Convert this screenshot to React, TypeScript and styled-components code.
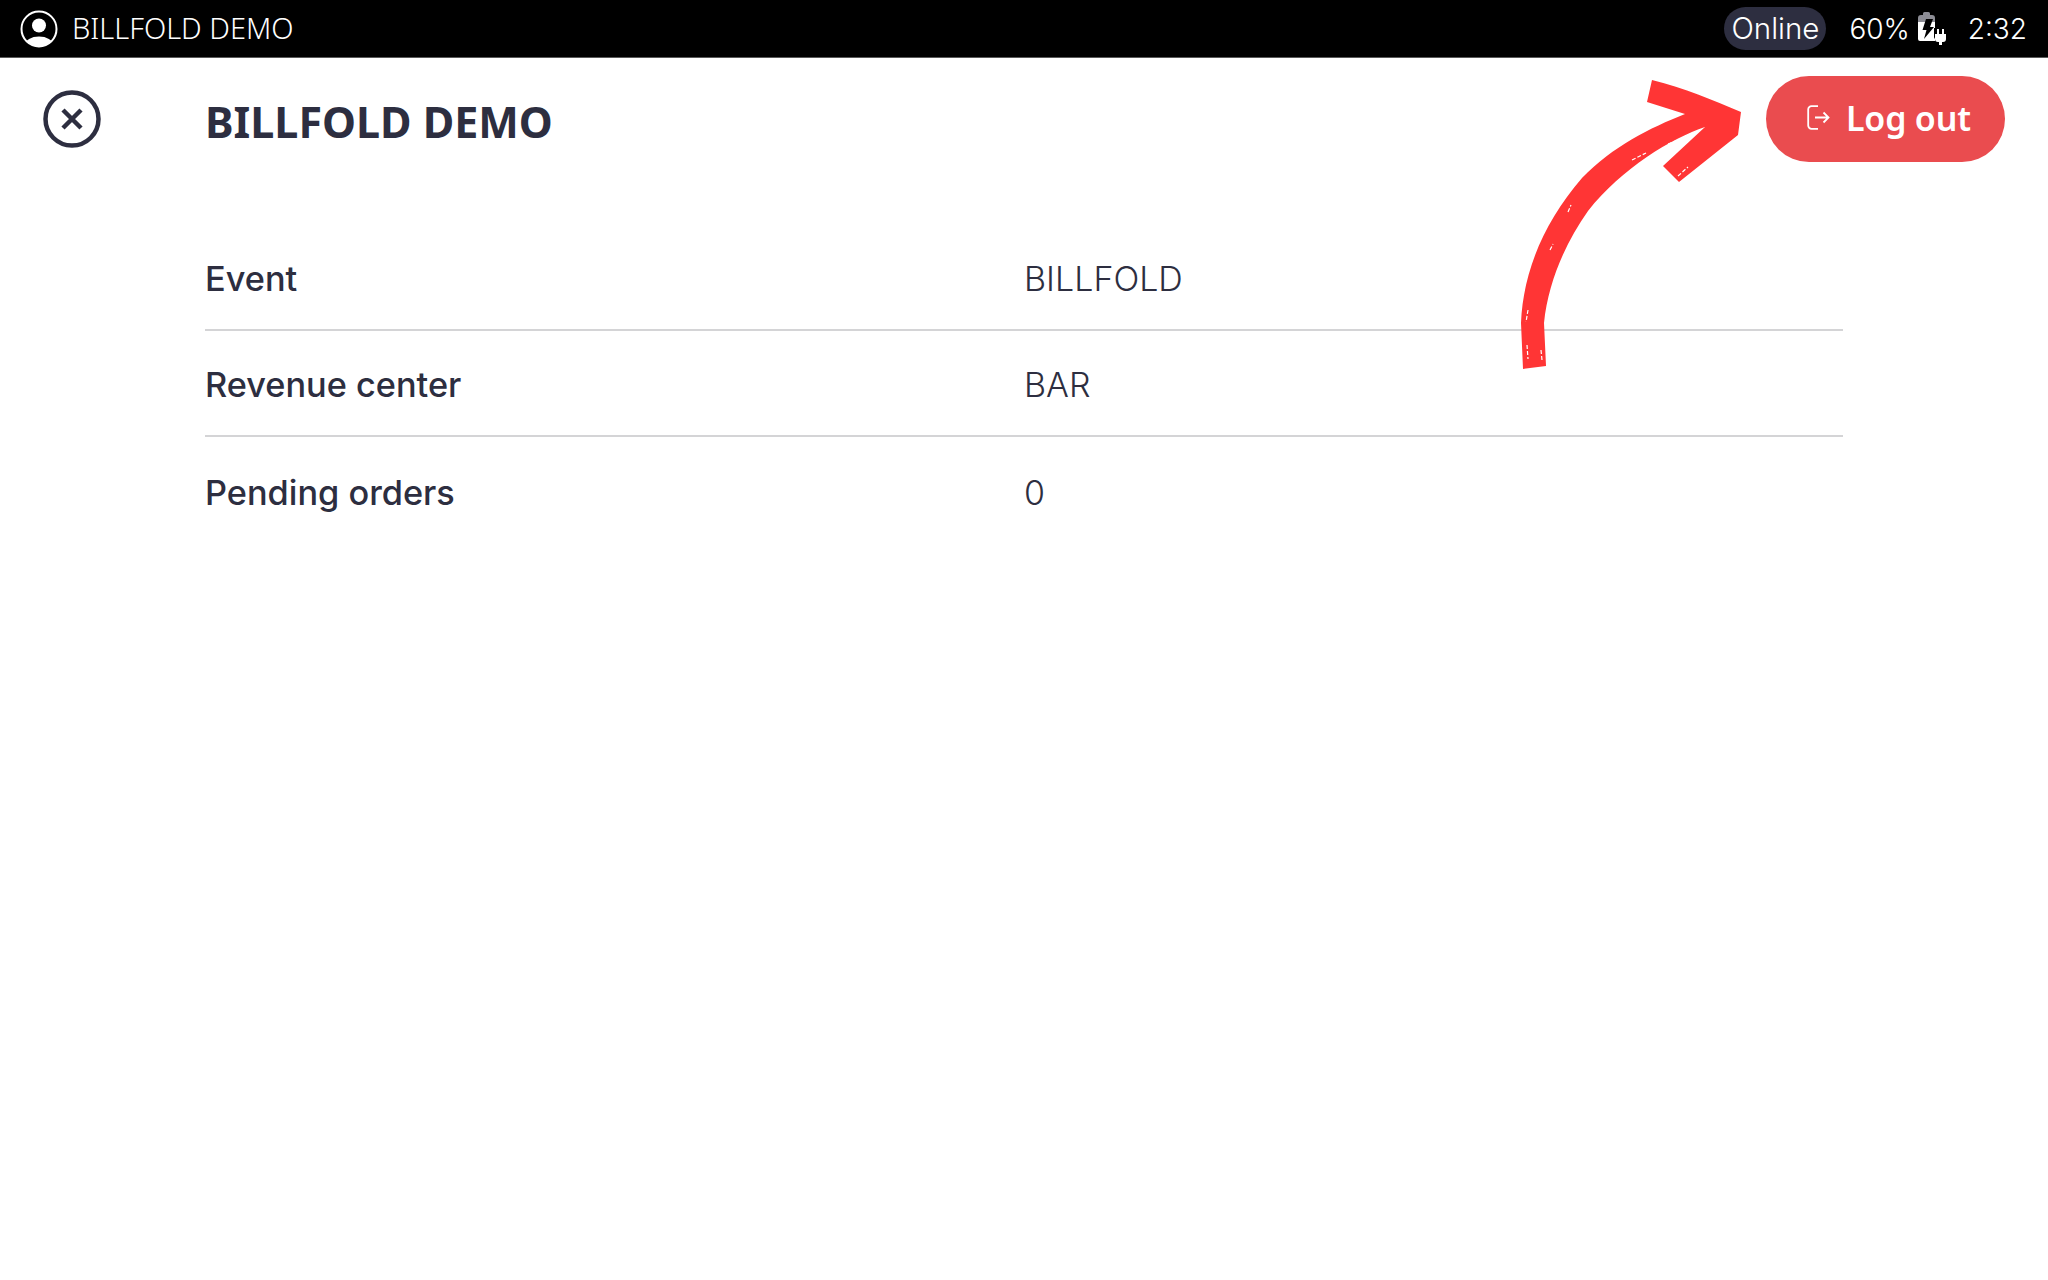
import React from 'react';
import styled, { createGlobalStyle } from 'styled-components';

const GlobalStyle = createGlobalStyle`
  html, body {
    margin: 0;
    padding: 0;
    background: #fff;
  }
  body {
    font-family: "Inter", "Liberation Sans", sans-serif;
    color: #2d2e40;
  }
`;

const Page = styled.div`
  position: relative;
  width: 2048px;
  height: 1280px;
  overflow: hidden;
  background: #fff;
`;

const StatusBar = styled.div`
  height: 58px;
  box-sizing: border-box;
  background: #000;
  border-bottom: 1px solid #5a5a5a;
  color: #fff;
  display: flex;
  align-items: center;
  justify-content: space-between;
  padding: 0 21px 0 20px;
`;

const StatusGroup = styled.div`
  display: flex;
  align-items: center;
`;

const AccountName = styled.span`
  font-family: "Noto Sans", sans-serif;
  font-size: 29px;
  font-weight: 300;
  margin-left: 14px;
  padding-bottom: 2px;
`;

const OnlinePill = styled.span`
  background: #2d2e40;
  border-radius: 22px;
  height: 43px;
  box-sizing: border-box;
  padding: 0 7px 2px;
  display: flex;
  align-items: center;
  font-size: 29.5px;
  font-weight: 300;
  margin-right: 23px;
`;

const StatusText = styled.span`
  font-size: 28px;
  font-weight: 300;
`;

const BatteryWrap = styled.span`
  display: flex;
  margin: 0 21px 0 8px;
`;

const Header = styled.div`
  display: flex;
  align-items: center;
  height: 86px;
  margin-top: 18px;
  padding: 0 43px;
`;

const CloseButton = styled.div`
  width: 58px;
  height: 58px;
  margin-right: 104px;
  display: flex;
`;

const Title = styled.h1`
  flex: 1;
  margin: 4px 0 0;
  font-family: "Noto Sans", sans-serif;
  font-size: 43px;
  font-weight: 700;
  color: #2d2e40;
`;

const LogoutButton = styled.div`
  width: 239px;
  height: 86px;
  box-sizing: border-box;
  padding: 0 0 3px 41px;
  border-radius: 43px;
  background: #ea4c4f;
  color: #fff;
  display: flex;
  align-items: center;
  gap: 16px;
  font-family: "Noto Sans", sans-serif;
  font-size: 34px;
  font-weight: 600;
  letter-spacing: -0.2px;
`;

const InfoTable = styled.div`
  margin: 62px 205px 0;
`;

const InfoRow = styled.div<{ $last?: boolean }>`
  display: grid;
  grid-template-columns: 819px 1fr;
  align-items: center;
  height: 106.5px;
  box-sizing: border-box;
  padding-top: 4px;
  border-bottom: ${(p) => (p.$last ? 'none' : '2px solid #d4d4d6')};
`;

const InfoLabel = styled.div`
  font-size: 34.3px;
  font-weight: 500;
  color: #2d2e40;
`;

const InfoValue = styled.div`
  font-size: 34px;
  font-weight: 300;
  color: #2d2e40;
`;

// hand drawn arrow sits on top of the screen
const ArrowOverlay = styled.svg`
  position: absolute;
  left: 1500px;
  top: 60px;
`;

const UserIcon = () => (
  <svg width="38" height="38" viewBox="0 0 38 38">
    <defs>
      <clipPath id="userClip">
        <circle cx="19" cy="19" r="17.5" />
      </clipPath>
    </defs>
    <g clipPath="url(#userClip)" fill="#fff">
      <circle cx="19" cy="15.5" r="7" />
      <ellipse cx="19" cy="35" rx="14" ry="8.5" />
    </g>
    <circle cx="19" cy="19" r="17.5" fill="none" stroke="#fff" strokeWidth="2" />
  </svg>
);

const BatteryIcon = () => (
  <svg width="29" height="33" viewBox="0 0 29 33">
    <path d="M0 10V6a3 3 0 0 1 3-3h2V1.5a1.5 1.5 0 0 1 1.5-1.5h4A1.5 1.5 0 0 1 12 1.5V3h2a3 3 0 0 1 3 3v4z" fill="#8c8c94" />
    <path d="M0 10h17v6h-1v9a3 3 0 0 0 1 2v2H2a2 2 0 0 1-2-2z" fill="#fff" />
    <path d="M8 7h7l-3 8h4L6 27l2.5-9H4.5z" fill="#000" />
    <path d="M17 22h2v-5h2v5h3v-5h2v5h2v5a3 3 0 0 1-3 3h-1v3h-3v-3h-1a3 3 0 0 1-3-3z" fill="#fff" />
  </svg>
);

const CloseIcon = () => (
  <svg width="58" height="58" viewBox="0 0 58 58">
    <circle cx="29" cy="29" r="26.5" fill="none" stroke="#2d2e40" strokeWidth="4.5" />
    <path d="M20 20l18 18M38 20L20 38" stroke="#2d2e40" strokeWidth="4.5" fill="none" />
  </svg>
);

const LogoutIcon = () => (
  <svg width="23" height="25" viewBox="0 0 23 25" fill="none" stroke="#fff" strokeWidth="1.8">
    <path d="M11 1.2H4.5a3.3 3.3 0 0 0-3.3 3.3v16a3.3 3.3 0 0 0 3.3 3.3H11" />
    <path d="M8 12.5h13.5M16.5 7.5l5 5-5 5" />
  </svg>
);

const rows = [
  { label: 'Event', value: 'BILLFOLD' },
  { label: 'Revenue center', value: 'BAR' },
  { label: 'Pending orders', value: '0' },
];

const App: React.FC = () => {
  return (
    <Page>
      <GlobalStyle />
      <StatusBar>
        <StatusGroup>
          <UserIcon />
          <AccountName>BILLFOLD DEMO</AccountName>
        </StatusGroup>
        <StatusGroup>
          <OnlinePill>Online</OnlinePill>
          <StatusText>60%</StatusText>
          <BatteryWrap>
            <BatteryIcon />
          </BatteryWrap>
          <StatusText>2:32</StatusText>
        </StatusGroup>
      </StatusBar>

      <Header>
        <CloseButton>
          <CloseIcon />
        </CloseButton>
        <Title>BILLFOLD DEMO</Title>
        <LogoutButton>
          <LogoutIcon />
          Log out
        </LogoutButton>
      </Header>

      <InfoTable>
        {rows.map((row, i) => (
          <InfoRow key={row.label} $last={i === rows.length - 1}>
            <InfoLabel>{row.label}</InfoLabel>
            <InfoValue>{row.value}</InfoValue>
          </InfoRow>
        ))}
      </InfoTable>

      <ArrowOverlay width="250" height="320" viewBox="0 0 250 320">
        <path
          d="M23 309 L21 263 C23 212 44 162 82 118 C113 86 150 68 185 54 L147 42 L152 20 C185 28 212 40 241 52 L238 75 L179 122 L163 106 L205 67 C172 78 122 108 88 151 C66 182 48 222 44 263 L46 306 Z"
          fill="#ff3535"
        />
        {/* dry brush flecks along the stroke */}
        <path
          d="M168 84l22-9M132 100l14-7M68 152l3-7M50 190l3-6M28 250l-2 12M27 285l1 14M41 290l1 10M178 116l10-9"
          stroke="#fff"
          strokeWidth="1.2"
          fill="none"
          strokeDasharray="4 2"
        />
      </ArrowOverlay>
    </Page>
  );
};

export default App;
